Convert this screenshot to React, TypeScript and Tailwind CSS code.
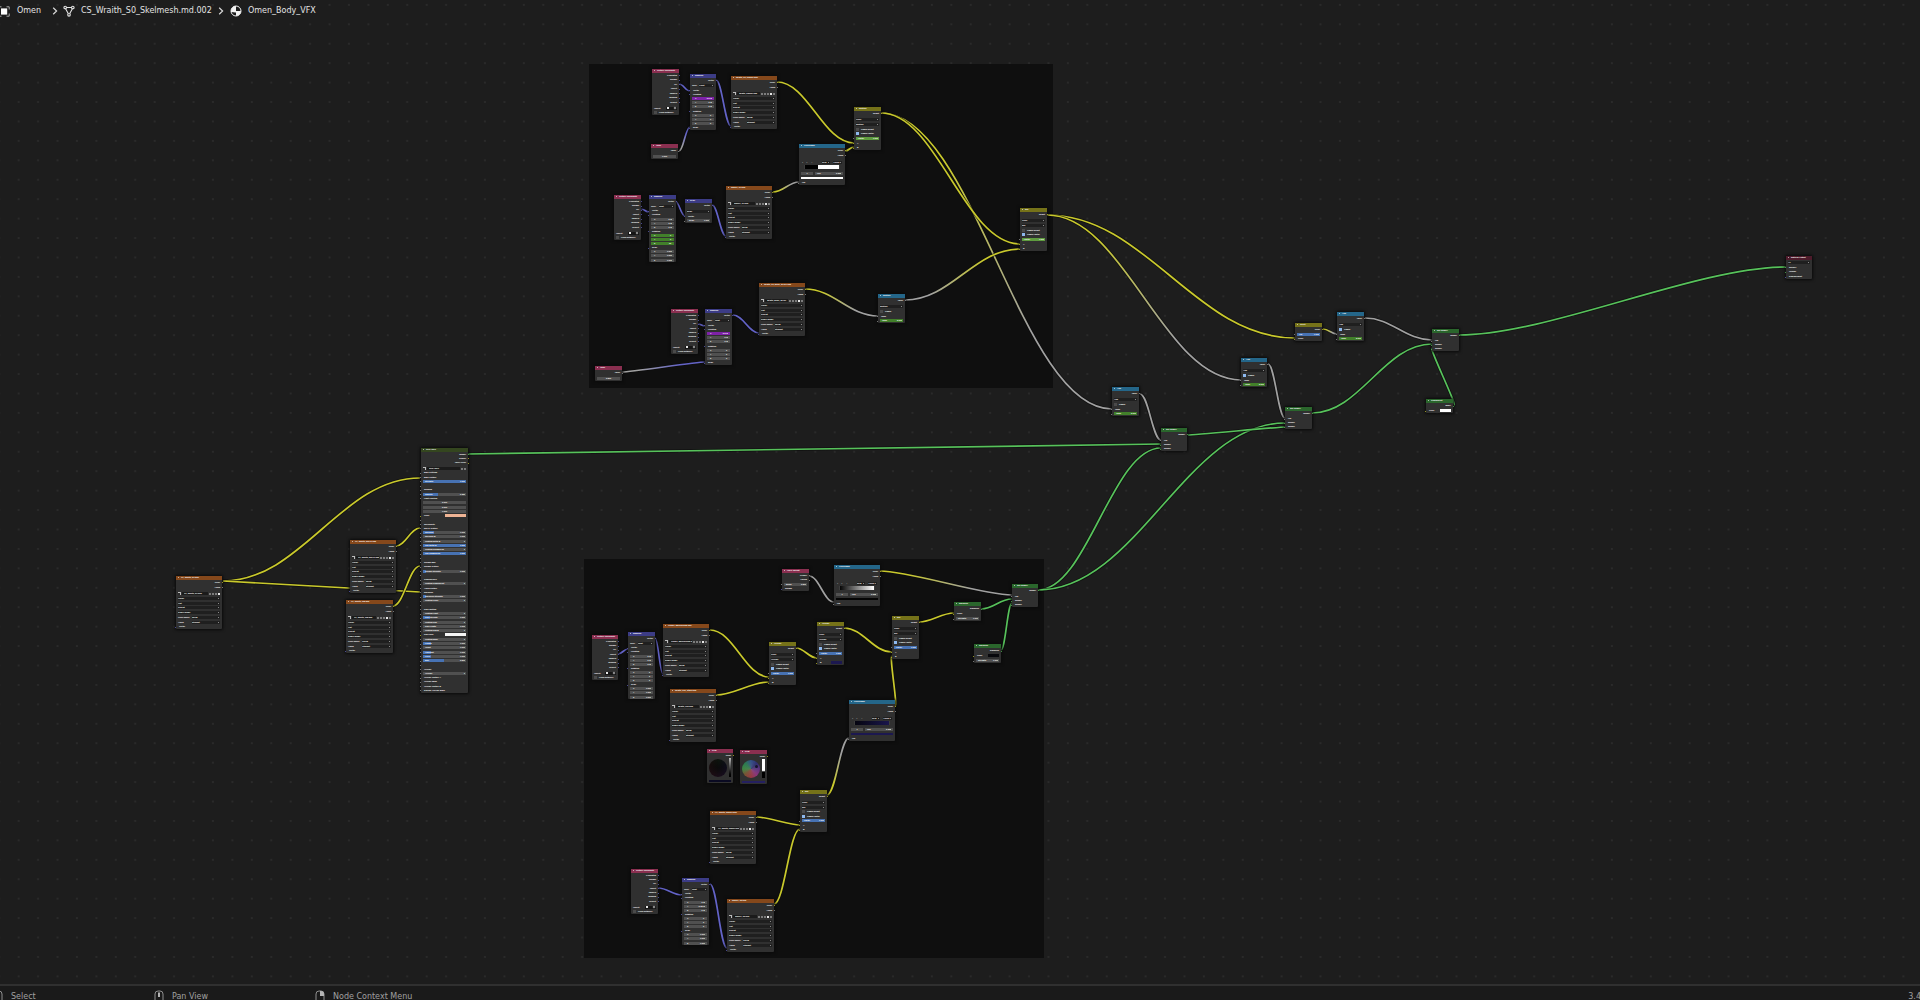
import React from "react";

type Tone = "plain" | "blue" | "green" | "lime" | "purple";

type Row =
  | { t: "out"; l: string; c?: string }
  | { t: "in"; l: string; c?: string; swatch?: string }
  | { t: "drop"; l: string }
  | { t: "split"; l: string; v: string }
  | { t: "check"; l: string; on: boolean }
  | { t: "num"; l: string; v: string; tone?: Tone; fill?: number; inset?: boolean }
  | { t: "image"; l: string; buttons: number }
  | { t: "object" }
  | { t: "rampbar"; from: string; to: string; stop: string }
  | { t: "rampfields" }
  | { t: "swatch"; c: string }
  | { t: "wheel"; dark: boolean }
  | { t: "gap" }
  | { t: "space" };

type NodeData = {
  id: string;
  title: string;
  head: string;
  x: number;
  y: number;
  w: number;
  h: number;
  rows: Row[];
};

const YELLOW = "#c9c92c";
const GREY = "#a1a1a1";
const GREEN = "#57c25b";
const BLUE = "#6363c7";

const HEAD = {
  input: "bg-[#8a2f50]",
  vector: "bg-[#3c3c86]",
  texture: "bg-[#85481b]",
  color: "bg-[#757219]",
  convert: "bg-[#246689]",
  shader: "bg-[#2a662c]",
  group: "bg-[#34461f]",
  output: "bg-[#4d1b2b]",
};

const TONES: Record<Tone, string> = {
  plain: "#505050",
  blue: "#4772b3",
  green: "#42802a",
  lime: "#5f9c3f",
  purple: "#7e22a8",
};

const texCoord: Row[] = [
  { t: "out", l: "Generated", c: BLUE },
  { t: "out", l: "Normal", c: BLUE },
  { t: "out", l: "UV", c: BLUE },
  { t: "out", l: "Object", c: BLUE },
  { t: "out", l: "Camera", c: BLUE },
  { t: "out", l: "Window", c: BLUE },
  { t: "out", l: "Reflect", c: BLUE },
  { t: "gap" },
  { t: "object" },
  { t: "check", l: "From Instancer", on: false },
];

const mapping = (loc: string[], rot: string[], scale: string[] | null, tones: Tone[] = []): Row[] => {
  const axis = (values: string[], base: number): Row[] =>
    values.map((v, i) => ({
      t: "num",
      l: "XYZ"[i],
      v,
      tone: tones[base + i] ?? "plain",
      inset: true,
    }));
  return [
    { t: "out", l: "Vector", c: BLUE },
    { t: "gap" },
    { t: "split", l: "Type:", v: "Point" },
    { t: "in", l: "Vector", c: BLUE },
    { t: "in", l: "Location", c: BLUE },
    ...axis(loc, 0),
    { t: "in", l: "Rotation", c: BLUE },
    ...axis(rot, 3),
    { t: "in", l: "Scale", c: BLUE },
    ...(scale ? axis(scale, 6) : []),
  ];
};

const image = (name: string, buttons = 5): Row[] => [
  { t: "out", l: "Color", c: YELLOW },
  { t: "out", l: "Alpha", c: GREY },
  { t: "gap" },
  { t: "image", l: name, buttons },
  { t: "drop", l: "Linear" },
  { t: "drop", l: "Flat" },
  { t: "drop", l: "Repeat" },
  { t: "drop", l: "Single Image" },
  { t: "split", l: "Color Space", v: "sRGB" },
  { t: "split", l: "Alpha", v: "Straight" },
  { t: "in", l: "Vector", c: BLUE },
];

const mix = (mode: string, tone: Tone, swatch?: string): Row[] => [
  { t: "out", l: "Result", c: YELLOW },
  { t: "gap" },
  { t: "drop", l: "Color" },
  { t: "drop", l: mode },
  { t: "check", l: "Clamp Result", on: false },
  { t: "check", l: "Clamp Factor", on: true },
  { t: "num", l: "Factor", v: "1.000", tone, fill: 100 },
  { t: "in", l: "A", c: YELLOW },
  { t: "in", l: "B", c: YELLOW, swatch },
];

const ramp = (from: string, to: string, stop: string, chosen: string): Row[] => [
  { t: "out", l: "Color", c: YELLOW },
  { t: "out", l: "Alpha", c: GREY },
  { t: "gap" },
  { t: "rampbar", from, to, stop },
  { t: "rampfields" },
  { t: "swatch", c: chosen },
  { t: "in", l: "Fac", c: GREY },
];

const math = (mode: string, on: boolean): Row[] => [
  { t: "out", l: "Value", c: GREY },
  { t: "gap" },
  { t: "drop", l: mode },
  { t: "check", l: "Clamp", on },
  { t: "in", l: "Value", c: GREY },
  { t: "num", l: "Value", v: "2.000", tone: "green" },
];

const mixShader: Row[] = [
  { t: "out", l: "Shader", c: GREEN },
  { t: "gap" },
  { t: "in", l: "Fac", c: GREY },
  { t: "in", l: "Shader", c: GREEN },
  { t: "in", l: "Shader", c: GREEN },
];

const emission = (swatch?: string): Row[] => [
  { t: "out", l: "Emission", c: GREEN },
  { t: "in", l: "Color", c: YELLOW, swatch },
  { t: "num", l: "Strength", v: "1.000" },
];

const value = (v: string): Row[] => [
  { t: "out", l: "Value", c: GREY },
  { t: "num", l: "", v },
];

const slider = (l: string, fill: number, v = "1.000"): Row => ({ t: "num", l, v, tone: "blue", fill });
const plain = (l: string, v = "0"): Row => ({ t: "num", l, v });
const label = (l: string): Row => ({ t: "in", l, c: GREY });

const groupRows: Row[] = [
  { t: "out", l: "Shader", c: GREEN },
  { t: "out", l: "Diffuse", c: YELLOW },
  { t: "out", l: "Layer Color", c: YELLOW },
  { t: "gap" },
  { t: "image", l: "NPR Layer", buttons: 2 },
  label("Base Settings"),
  label("Base Texture"),
  slider("Strength", 100),
  { t: "space" },
  label("Shading"),
  slider("Smooth", 35, "0.350"),
  label("Light Position"),
  { t: "num", l: "", v: "0.000" },
  { t: "num", l: "", v: "0.000" },
  { t: "num", l: "", v: "1.000" },
  { t: "in", l: "Color", c: YELLOW, swatch: "#eeb394" },
  { t: "space" },
  label("Specularity"),
  label("MRAE Texture"),
  slider("Specular", 26),
  plain("Specular B", "1.000"),
  plain("Custom Metal B"),
  slider("Use Metal B", 100),
  plain("Custom Roughness"),
  slider("Use Roughness", 100),
  { t: "space" },
  label("Normal Map"),
  label("Normal Texture"),
  slider("Normal Strength", 8),
  { t: "space" },
  label("Translucency"),
  plain("Custom Translucent"),
  label("Alpha Texture"),
  label("Emission"),
  slider("Emission Strength", 8),
  plain("Custom Color"),
  { t: "space" },
  label("Rim Lighting"),
  plain("Custom Light"),
  slider("Rim Strength", 16),
  plain("Custom Rim"),
  plain("Rim Length", "1.000"),
  plain("Custom Rim B"),
  { t: "in", l: "Rim Color", c: YELLOW, swatch: "#f4f4f4" },
  plain("Custom Edge"),
  slider("Length", 18),
  plain("Offset", "1.000"),
  slider("Highlight", 18),
  slider("Level", 18),
  slider("Blur", 48, "0.500"),
  { t: "space" },
  label("Overlay"),
  plain("Overlay"),
  label("Overlay Texture A"),
  label("Overlay Mask"),
  label("Overlay Texture B"),
  label("Discard Overlay Mask"),
];

const ZERO = ["0 m", "0 m", "0 m"];
const DEG = ["0°", "0°", "0°"];
const ONE = ["1.000", "1.000", "1.000"];
const NAVY = "#1c1850";

const nodes: NodeData[] = [
  { id: "tcA", title: "Texture Coordinate", head: HEAD.input, x: 652, y: 69, w: 27, h: 46, rows: texCoord },
  { id: "mapA", title: "Mapping", head: HEAD.vector, x: 690, y: 74, w: 26, h: 56, rows: mapping(["-0.6 m", "0 m", "0 m"], DEG, null, ["purple"]) },
  { id: "valA", title: "Value", head: HEAD.input, x: 651, y: 144, w: 27, h: 15, rows: value("1.000") },
  { id: "imgA", title: "Wraith_S0_Smoke.png", head: HEAD.texture, x: 731, y: 76, w: 46, h: 53, rows: image("Wraith_Smoke.png") },
  { id: "rampA", title: "ColorRamp", head: HEAD.convert, x: 799, y: 144, w: 46, h: 41, rows: ramp("#000000", "#ffffff", "38%", "#ffffff") },
  { id: "mixA", title: "Multiply", head: HEAD.color, x: 854, y: 107, w: 27, h: 43, rows: mix("Multiply", "lime") },
  { id: "tcB", title: "Texture Coordinate", head: HEAD.input, x: 614, y: 195, w: 27, h: 45, rows: texCoord },
  { id: "mapB", title: "Mapping", head: HEAD.vector, x: 649, y: 195, w: 27, h: 67, rows: mapping(ZERO, ["0°", "0°", "90°"], ONE, ["plain", "plain", "plain", "green", "green", "green"]) },
  { id: "scaleB", title: "Scale", head: HEAD.vector, x: 685, y: 199, w: 27, h: 24, rows: [{ t: "out", l: "Vector", c: BLUE }, { t: "gap" }, { t: "drop", l: "Scale" }, { t: "in", l: "Vector", c: BLUE }, { t: "num", l: "Scale", v: "1.000" }] },
  { id: "imgB", title: "Smoke_01.png", head: HEAD.texture, x: 726, y: 186, w: 46, h: 53, rows: image("Smoke_01.png") },
  { id: "tcC", title: "Texture Coordinate", head: HEAD.input, x: 671, y: 309, w: 27, h: 45, rows: texCoord },
  { id: "mapC", title: "Mapping", head: HEAD.vector, x: 705, y: 309, w: 27, h: 56, rows: mapping(["-0.3 m", "0 m", "0 m"], DEG, null, ["purple"]) },
  { id: "imgC", title: "Wraith_S0_Body_MASK.png", head: HEAD.texture, x: 759, y: 283, w: 46, h: 53, rows: image("Wraith_Body_MASK") },
  { id: "mathC", title: "Multiply", head: HEAD.convert, x: 878, y: 294, w: 27, h: 29, rows: math("Multiply", false) },
  { id: "valC", title: "Value", head: HEAD.input, x: 595, y: 366, w: 27, h: 15, rows: value("0.500") },
  { id: "imgD", title: "TX_Wraith_DF.png", head: HEAD.texture, x: 176, y: 576, w: 46, h: 53, rows: image("TX_Wraith_DF.png", 4) },
  { id: "imgE", title: "TX_Wraith_MRAE.png", head: HEAD.texture, x: 350, y: 540, w: 46, h: 53, rows: image("TX_Wraith_MRAE.png") },
  { id: "imgF", title: "TX_Wraith_NM.png", head: HEAD.texture, x: 346, y: 600, w: 47, h: 53, rows: image("TX_Wraith_NM.png") },
  { id: "group", title: "NPR Layer", head: HEAD.group, x: 421, y: 448, w: 47, h: 245, rows: groupRows },
  { id: "tcG", title: "Texture Coordinate", head: HEAD.input, x: 592, y: 635, w: 26, h: 45, rows: texCoord },
  { id: "mapG", title: "Mapping", head: HEAD.vector, x: 628, y: 632, w: 27, h: 67, rows: mapping(ZERO, DEG, ONE) },
  { id: "imgG", title: "Galaxy_Background.png", head: HEAD.texture, x: 663, y: 624, w: 46, h: 53, rows: image("Galaxy_Background.png", 5) },
  { id: "imgH", title: "Wraith_Sky_Stars.png", head: HEAD.texture, x: 670, y: 689, w: 46, h: 53, rows: image("Wraith_Sky.png") },
  { id: "mixG", title: "Overlay", head: HEAD.color, x: 769, y: 642, w: 27, h: 43, rows: mix("Overlay", "blue") },
  { id: "mixH", title: "Overlay", head: HEAD.color, x: 817, y: 622, w: 27, h: 43, rows: mix("Overlay", "blue", NAVY) },
  { id: "mixI", title: "Mix", head: HEAD.color, x: 892, y: 616, w: 27, h: 43, rows: mix("Mix", "blue") },
  { id: "weight", title: "Layer Weight", head: HEAD.input, x: 782, y: 569, w: 27, h: 22, rows: [{ t: "out", l: "Fresnel", c: GREY }, { t: "out", l: "Facing", c: GREY }, { t: "num", l: "Blend", v: "0.500" }, { t: "in", l: "Normal", c: BLUE }] },
  { id: "rampG", title: "ColorRamp", head: HEAD.convert, x: 834, y: 565, w: 46, h: 41, rows: ramp("#060606", "#ffffff", "", "#050505") },
  { id: "rampH", title: "ColorRamp", head: HEAD.convert, x: 849, y: 700, w: 46, h: 41, rows: ramp("#050510", "#1a164c", "", NAVY) },
  { id: "shaderG", title: "Mix Shader", head: HEAD.shader, x: 1012, y: 584, w: 26, h: 23, rows: mixShader },
  { id: "emA", title: "Emission", head: HEAD.shader, x: 954, y: 602, w: 27, h: 19, rows: emission() },
  { id: "emB", title: "Emission", head: HEAD.shader, x: 974, y: 644, w: 27, h: 19, rows: emission("#08080c") },
  { id: "rgb1", title: "RGB", head: HEAD.input, x: 707, y: 749, w: 26, h: 34, rows: [{ t: "out", l: "Color", c: YELLOW }, { t: "wheel", dark: true }, { t: "swatch", c: "#0a0a22" }] },
  { id: "rgb2", title: "RGB", head: HEAD.input, x: 740, y: 750, w: 27, h: 34, rows: [{ t: "out", l: "Color", c: YELLOW }, { t: "wheel", dark: false }, { t: "swatch", c: "#252060" }] },
  { id: "mixJ", title: "Mix", head: HEAD.color, x: 800, y: 790, w: 27, h: 42, rows: mix("Mix", "blue") },
  { id: "imgI", title: "FX_Wraith_Smoke.png", head: HEAD.texture, x: 710, y: 811, w: 46, h: 53, rows: image("FX_Wraith_Smoke.png") },
  { id: "tcJ", title: "Texture Coordinate", head: HEAD.input, x: 631, y: 869, w: 27, h: 45, rows: texCoord },
  { id: "mapJ", title: "Mapping", head: HEAD.vector, x: 682, y: 878, w: 27, h: 67, rows: mapping(["0 m", "-0.05 m", "0 m"], DEG, ONE) },
  { id: "imgJ", title: "Smoke_02.png", head: HEAD.texture, x: 727, y: 899, w: 47, h: 53, rows: image("Smoke_02.png") },
  { id: "mixK", title: "Mix", head: HEAD.color, x: 1020, y: 208, w: 27, h: 43, rows: mix("Mix", "lime") },
  { id: "invert", title: "Invert", head: HEAD.color, x: 1295, y: 323, w: 27, h: 18, rows: [{ t: "out", l: "Color", c: YELLOW }, slider("Fac", 100), { t: "in", l: "Color", c: YELLOW }] },
  { id: "math1", title: "Add", head: HEAD.convert, x: 1337, y: 312, w: 27, h: 29, rows: math("Add", true) },
  { id: "math2", title: "Add", head: HEAD.convert, x: 1241, y: 358, w: 26, h: 29, rows: math("Add", true) },
  { id: "math3", title: "Add", head: HEAD.convert, x: 1112, y: 387, w: 27, h: 29, rows: math("Add", false) },
  { id: "shaderA", title: "Mix Shader", head: HEAD.shader, x: 1161, y: 428, w: 26, h: 23, rows: mixShader },
  { id: "shaderB", title: "Mix Shader", head: HEAD.shader, x: 1285, y: 407, w: 27, h: 22, rows: mixShader },
  { id: "shaderC", title: "Mix Shader", head: HEAD.shader, x: 1432, y: 329, w: 27, h: 22, rows: mixShader },
  { id: "transparent", title: "Transparent", head: HEAD.shader, x: 1426, y: 399, w: 27, h: 14, rows: [{ t: "out", l: "BSDF", c: GREEN }, { t: "in", l: "Color", c: YELLOW, swatch: "#ffffff" }] },
  { id: "output", title: "Material Output", head: HEAD.output, x: 1786, y: 256, w: 26, h: 23, rows: [{ t: "drop", l: "All" }, { t: "in", l: "Surface", c: GREEN }, { t: "in", l: "Volume", c: GREEN }, { t: "in", l: "Displacement", c: BLUE }] },
];

type Link = [number, number, number, number, string, string];

const links: Link[] = [
  [679, 84, 690, 91, BLUE, BLUE],
  [679, 151, 690, 127, GREY, BLUE],
  [716, 80, 731, 126, BLUE, BLUE],
  [777, 82, 854, 143, YELLOW, YELLOW],
  [845, 151, 854, 147, YELLOW, YELLOW],
  [773, 192, 799, 182, YELLOW, GREY],
  [641, 209, 649, 212, BLUE, BLUE],
  [675, 201, 685, 216, BLUE, BLUE],
  [712, 205, 726, 236, BLUE, BLUE],
  [881, 113, 1112, 409, YELLOW, GREY],
  [881, 113, 1020, 244, YELLOW, YELLOW],
  [698, 324, 705, 326, BLUE, BLUE],
  [622, 372, 705, 362, GREY, BLUE],
  [733, 315, 759, 333, BLUE, BLUE],
  [805, 289, 878, 316, YELLOW, GREY],
  [905, 300, 1020, 249, GREY, YELLOW],
  [223, 581, 420, 478, YELLOW, YELLOW],
  [223, 581, 420, 592, YELLOW, YELLOW],
  [396, 546, 420, 528, YELLOW, YELLOW],
  [393, 606, 420, 566, YELLOW, YELLOW],
  [468, 454, 1161, 444, GREEN, GREEN],
  [618, 654, 628, 649, BLUE, BLUE],
  [655, 638, 663, 674, BLUE, BLUE],
  [710, 630, 769, 677, YELLOW, YELLOW],
  [716, 695, 769, 682, YELLOW, YELLOW],
  [796, 648, 817, 658, YELLOW, YELLOW],
  [844, 628, 892, 652, YELLOW, YELLOW],
  [895, 706, 892, 656, YELLOW, YELLOW],
  [919, 622, 954, 613, YELLOW, YELLOW],
  [809, 576, 834, 602, GREY, GREY],
  [880, 571, 1012, 595, YELLOW, GREY],
  [981, 609, 1012, 599, GREEN, GREEN],
  [1001, 650, 1012, 603, GREEN, GREEN],
  [1038, 590, 1161, 448, GREEN, GREEN],
  [1038, 590, 1285, 423, GREEN, GREEN],
  [827, 795, 849, 738, YELLOW, GREY],
  [757, 817, 800, 825, YELLOW, YELLOW],
  [774, 904, 800, 829, YELLOW, YELLOW],
  [658, 888, 682, 895, BLUE, BLUE],
  [710, 884, 727, 948, BLUE, BLUE],
  [1047, 215, 1295, 338, YELLOW, YELLOW],
  [1047, 215, 1241, 380, YELLOW, GREY],
  [1323, 329, 1337, 334, YELLOW, GREY],
  [1365, 318, 1432, 340, GREY, GREY],
  [1268, 364, 1285, 418, GREY, GREY],
  [1140, 394, 1161, 440, GREY, GREY],
  [1188, 435, 1285, 427, GREEN, GREEN],
  [1312, 413, 1432, 344, GREEN, GREEN],
  [1454, 405, 1432, 348, GREEN, GREEN],
  [1459, 335, 1786, 267, GREEN, GREEN],
];

/* Flat links straighten out; steep ones get the full handle length. */
function linkPath(x1: number, y1: number, x2: number, y2: number) {
  const dx = x2 - x1;
  const slope = Math.abs((y2 - y1) / dx);
  const ease = Math.min(1, Math.max(0, slope * 4.5 - 0.25));
  const reach = dx > 0 ? dx * 0.4 * ease : 3;
  return `M${x1} ${y1}C${x1 + reach} ${y1} ${x2 - reach} ${y2} ${x2} ${y2}`;
}

function Links() {
  return (
    <svg className="absolute inset-0 h-full w-full" aria-hidden="true" fill="none">
      <defs>
        {links.map(([x1, y1, x2, y2, a, b], i) => (
          <linearGradient key={i} id={`link${i}`} gradientUnits="userSpaceOnUse" x1={x1} y1={y1} x2={x2} y2={y2}>
            <stop offset="0.2" stopColor={a} />
            <stop offset="0.7" stopColor={b} />
          </linearGradient>
        ))}
      </defs>
      {links.map(([x1, y1, x2, y2, a, b], i) => {
        const d = linkPath(x1, y1, x2, y2);
        return (
          <g key={i}>
            <path d={d} stroke="#0c0c0c" strokeOpacity="0.7" strokeWidth="3.2" />
            <path d={d} stroke={a === b ? a : `url(#link${i})`} strokeWidth="1.7" />
          </g>
        );
      })}
    </svg>
  );
}

function Dots() {
  return (
    <svg className="absolute inset-0 h-full w-full" aria-hidden="true">
      <defs>
        <pattern id="dots" width="19.43" height="19.43" x="9" y="14.6" patternUnits="userSpaceOnUse">
          <circle cx="9.7" cy="9.7" r="1" fill="#2d2d2d" />
        </pattern>
      </defs>
      <rect width="100%" height="100%" fill="url(#dots)" />
    </svg>
  );
}

function Dot({ side, c }: { side: "l" | "r"; c?: string }) {
  return (
    <span
      className={side === "l" ? "absolute top-1/2 -left-px size-px opacity-70" : "absolute top-1/2 -right-px size-px opacity-70"}
      style={{ backgroundColor: c ?? GREY }}
    />
  );
}

function Drop({ l, name }: { l: string; name: string }) {
  return (
    <span className="flex h-[3px] min-w-0 flex-1 items-center bg-[#1f1f1f] pr-px">
      <select aria-label={name} className="h-[3px] min-w-0 flex-1 appearance-none bg-transparent p-0 leading-[3px] outline-none">
        <option>{l}</option>
      </select>
      <span className="size-px bg-[#8a8a8a]" />
    </span>
  );
}

function RowView({ row, node }: { row: Row; node: NodeData }) {
  switch (row.t) {
    case "gap":
      return <div className="min-h-0 flex-[0.4]" />;
    case "space":
      return (
        <div className="relative min-h-0 flex-1">
          <Dot side="l" />
        </div>
      );
    case "out":
      return (
        <div className="relative flex min-h-0 flex-1 items-center justify-end pr-[2px]">
          {row.l}
          <Dot side="r" c={row.c} />
        </div>
      );
    case "in":
      return (
        <div className="relative flex min-h-0 flex-1 items-center pr-[2px] pl-[3px]">
          <Dot side="l" c={row.c} />
          <span className="flex-1 whitespace-nowrap">{row.l}</span>
          {row.swatch && (
            <button
              type="button"
              aria-label={`${row.l} swatch`}
              className="h-[3px] w-1/2"
              style={{ backgroundColor: row.swatch }}
            />
          )}
        </div>
      );
    case "drop":
      return (
        <div className="flex min-h-0 flex-1 items-center px-[2px]">
          <Drop l={row.l} name={`${node.title} ${row.l}`} />
        </div>
      );
    case "split":
      return (
        <div className="flex min-h-0 flex-1 items-center px-[2px]">
          <span className="w-1/3 whitespace-nowrap">{row.l}</span>
          <Drop l={row.v} name={row.l} />
        </div>
      );
    case "check":
      return (
        <label className="flex min-h-0 flex-1 items-center gap-px pl-[2px]">
          <input
            type="checkbox"
            defaultChecked={row.on}
            className="size-[3px] appearance-none bg-[#4a4a4a] checked:bg-[#8db8ee]"
          />
          <span className="pl-px whitespace-nowrap">{row.l}</span>
        </label>
      );
    case "num": {
      const tone = TONES[row.tone ?? "plain"];
      const fill = row.fill ?? 100;
      return (
        <div className="relative flex min-h-0 flex-1 items-center px-[2px]">
          {!row.inset && row.l && <Dot side="l" />}
          <label
            className={row.inset ? "flex h-[3px] min-w-0 flex-1 items-center px-[2px]" : "flex h-[3px] min-w-0 flex-1 items-center px-px"}
            style={{ background: `linear-gradient(90deg, ${tone} ${fill}%, ${TONES.plain} ${fill}%)` }}
          >
            {row.l && <span className="pl-px whitespace-nowrap">{row.l}</span>}
            <input
              aria-label={row.l || node.title}
              defaultValue={row.v}
              className={
                row.l
                  ? "h-[3px] w-0 min-w-0 flex-1 bg-transparent p-0 text-right leading-[3px] outline-none"
                  : "h-[3px] w-0 min-w-0 flex-1 bg-transparent p-0 text-center leading-[3px] outline-none"
              }
            />
          </label>
        </div>
      );
    }
    case "image":
      return (
        <div className="flex min-h-0 flex-1 items-center gap-px px-[2px]">
          <button type="button" aria-label="Browse" className="flex size-[3px] items-end bg-[#bdbdbd]">
            <span className="size-[2px] bg-[#2a2a2a]" />
          </button>
          <input
            aria-label={`${node.title} name`}
            defaultValue={row.l}
            className="h-[3px] w-0 min-w-0 flex-1 bg-[#1b1b1b] p-0 pl-[2px] leading-[3px] outline-none"
          />
          {["Users", "Fake user", "New", "Open", "Unlink"].slice(0, row.buttons).map((b, i) => (
            <button
              key={b}
              type="button"
              aria-label={b}
              className={i === 3 ? "size-[2px] bg-[#e6e6e6]" : "size-[2px] bg-[#7c7c7c]"}
            />
          ))}
        </div>
      );
    case "object":
      return (
        <label className="flex min-h-0 flex-1 items-center px-[2px]">
          <span className="flex-1">Object:</span>
          <span className="flex h-[3px] w-1/2 items-center justify-between bg-[#151515] px-px">
            <span className="size-[2px] bg-[#e8e8e8]" />
            <input aria-label="Object" className="h-[2px] w-0 min-w-0 flex-1 bg-transparent p-0" />
            <span className="size-[2px] rotate-45 bg-[#9a9a9a]" />
          </span>
        </label>
      );
    case "rampbar":
      return (
        <div className="flex min-h-0 flex-[2.4] flex-col justify-center px-[3px]">
          <div className="flex h-[3px] items-center gap-[3px] leading-[3px]">
            <button type="button" className="leading-[3px]">+</button>
            <button type="button" className="leading-[3px]">−</button>
            <span className="flex-1 pl-px">⌄</span>
            <Drop l="RGB" name="Color mode" />
            <Drop l="Linear" name="Interpolation" />
          </div>
          <div
            className="mx-[2px] mt-px h-[4px] border-x border-[#3d3d3d]"
            style={{
              background: row.stop
                ? `linear-gradient(90deg, ${row.from} ${row.stop}, ${row.to} ${row.stop})`
                : `linear-gradient(90deg, ${row.from}, ${row.to})`,
            }}
          />
        </div>
      );
    case "rampfields":
      return (
        <div className="flex min-h-0 flex-1 items-center gap-[2px] px-[2px]">
          <input
            aria-label="Active stop"
            defaultValue="1"
            className="h-[3px] w-[12px] bg-[#505050] p-0 text-center leading-[3px]"
          />
          <label className="flex h-[3px] flex-1 items-center bg-[#505050] px-[2px]">
            Pos
            <input
              aria-label="Position"
              defaultValue="0.368"
              className="h-[3px] w-0 min-w-0 flex-1 bg-transparent p-0 text-right leading-[3px]"
            />
          </label>
        </div>
      );
    case "swatch":
      return (
        <div className="flex min-h-0 flex-1 items-center px-[2px]">
          <button type="button" aria-label="Color" className="h-[2px] flex-1" style={{ backgroundColor: row.c }} />
        </div>
      );
    case "wheel":
      return (
        <div className="flex min-h-0 flex-[5] items-center justify-between px-[2px]">
          <div
            className="relative size-[18px] rounded-full"
            style={{
              background: row.dark
                ? "radial-gradient(#0b0b0b, transparent), conic-gradient(#0d1a0d, #0d0d20, #1c0d24, #240d18, #1a0d0d, #0d160d)"
                : "radial-gradient(#80808055, transparent), conic-gradient(#2a4a8a, #24246e, #5a2a80, #8a2a78, #9a2f3a, #7a4a28, #35853a, #1f7a4a, #2a4a8a)",
            }}
          >
            {!row.dark && <span className="absolute top-[5px] right-[2px] size-[3px] rounded-full bg-[#14142c]" />}
          </div>
          <div
            className={
              row.dark
                ? "h-[19px] w-[2px] bg-linear-to-b from-[#bbbbbb] to-black"
                : "h-[19px] w-[3px] bg-linear-to-b from-white from-60% to-black to-70%"
            }
          />
        </div>
      );
  }
}

function NodeCard({ node }: { node: NodeData }) {
  return (
    <section
      aria-label={node.title}
      className="absolute flex flex-col rounded-[1px] bg-[#303030] shadow-[0_0_3px_1px_#0a0a0a]"
      style={{ left: node.x, top: node.y, width: node.w, height: node.h }}
    >
      <h2 className={`flex h-[4px] shrink-0 items-start gap-[2px] pl-[2px] leading-[3px] whitespace-nowrap ${node.head}`}>
        <span className="mt-px size-px bg-white/60" />
        {node.title}
      </h2>
      <div className="flex min-h-0 flex-1 flex-col">
        {node.rows.map((row, i) => (
          <RowView key={i} row={row} node={node} />
        ))}
      </div>
    </section>
  );
}

function Chevron() {
  return (
    <svg viewBox="0 0 6 8" className="h-2 w-[6px] shrink-0" fill="none" stroke="#d8d8d8" strokeWidth="1.2" aria-hidden="true">
      <path d="M1.2 .8 4.6 4 1.2 7.2" />
    </svg>
  );
}

function Breadcrumb() {
  return (
    <nav className="relative z-10 flex h-[22px] items-center text-[8px] leading-[12px] whitespace-nowrap text-[#e4e4e4]">
      <a href="#object" className="flex w-[52px] shrink-0 items-center gap-[7px]">
        <svg viewBox="0 0 10 11" className="h-[11px] w-[10px] shrink-0" fill="none" aria-hidden="true">
          <rect x="1" y="2.4" width="6.2" height="6.2" fill="#fff" />
          <path d="M6.500.8H9.200V3.500M9.200 7.500V10.200H6.500M0 .8H1.500M0 10.200H1.500" stroke="#a8a8a8" />
        </svg>
        Omen
      </a>
      <Chevron />
      <a href="#mesh" className="flex w-[160px] shrink-0 items-center gap-[6px] pl-[5px]">
        <svg viewBox="0 0 12 12" className="size-3 shrink-0" fill="none" stroke="#e2e2e2" strokeWidth="1.1" aria-hidden="true">
          <path d="M3.500 2.500H8.500M2.600 3.800 5.200 8.600M9.400 3.800 6.800 8.600" />
          <circle cx="2.200" cy="2.500" r="1.300" />
          <circle cx="9.800" cy="2.500" r="1.300" />
          <circle cx="6" cy="9.800" r="1.300" />
        </svg>
        CS_Wraith_S0_Skelmesh.md.002
      </a>
      <Chevron />
      <a href="#material" className="flex items-center gap-[6px] pl-[6px]">
        <svg viewBox="0 0 12 12" className="size-3 shrink-0" fill="none" aria-hidden="true">
          <circle cx="6" cy="6" r="5" fill="#1d1d1d" stroke="#f2f2f2" strokeWidth="1" />
          <path d="M6 6V1A5 5 0 0 0 1 6V7L6 7.500V11A5 5 0 0 0 11 6Z" fill="#f2f2f2" />
        </svg>
        Omen_Body_VFX
      </a>
    </nav>
  );
}

function Mouse({ button }: { button: "left" | "middle" | "right" }) {
  return (
    <svg viewBox="0 0 10 13" className="h-[13px] w-[10px] shrink-0" fill="none" aria-hidden="true">
      <path d="M1 13V4A3 3 0 0 1 4 1H6A3 3 0 0 1 9 4V13" stroke="#8f8f8f" />
      {button === "left" && <path d="M1 6V4A3 3 0 0 1 4 1H5V6Z" fill="#b5b5b5" />}
      {button === "middle" && <rect x="4" y="2.500" width="2" height="4.500" fill="#b5b5b5" />}
      {button === "right" && <path d="M9 6V4A3 3 0 0 0 6 1H5V6Z" fill="#b5b5b5" />}
    </svg>
  );
}

function StatusBar() {
  return (
    <footer className="relative z-10 flex h-4 shrink-0 overflow-hidden border-t-2 border-[#303030] bg-[#1a1a1a] text-[8px] leading-[12px] whitespace-nowrap text-[#a0a0a0]">
      <div className="-ml-[7px] flex h-[21px] w-[161px] items-center gap-[8px]">
        <Mouse button="left" />
        Select
      </div>
      <div className="flex h-[21px] w-[161px] items-center gap-[8px]">
        <Mouse button="middle" />
        Pan View
      </div>
      <div className="flex h-[21px] items-center gap-[8px]">
        <Mouse button="right" />
        Node Context Menu
      </div>
      <div className="-mr-px ml-auto flex h-[21px] items-center">3.4</div>
    </footer>
  );
}

export default function App() {
  return (
    <div className="flex h-screen flex-col overflow-hidden bg-[#1d1d1d] font-['DejaVu_Sans',sans-serif]">
      <main className="relative min-h-0 flex-1 overflow-hidden">
        <Dots />
        <div className="absolute top-[64px] left-[589px] h-[324px] w-[464px] bg-[#0f0f0f]" />
        <div className="absolute top-[559px] left-[584px] h-[399px] w-[460px] bg-[#0f0f0f]" />
        <Links />
        <div className="absolute inset-0 font-['Liberation_Sans',sans-serif] text-[2px] leading-[3px] font-bold text-white">
          {nodes.map((n) => (
            <NodeCard key={n.id} node={n} />
          ))}
        </div>
        <Breadcrumb />
      </main>
      <StatusBar />
    </div>
  );
}
